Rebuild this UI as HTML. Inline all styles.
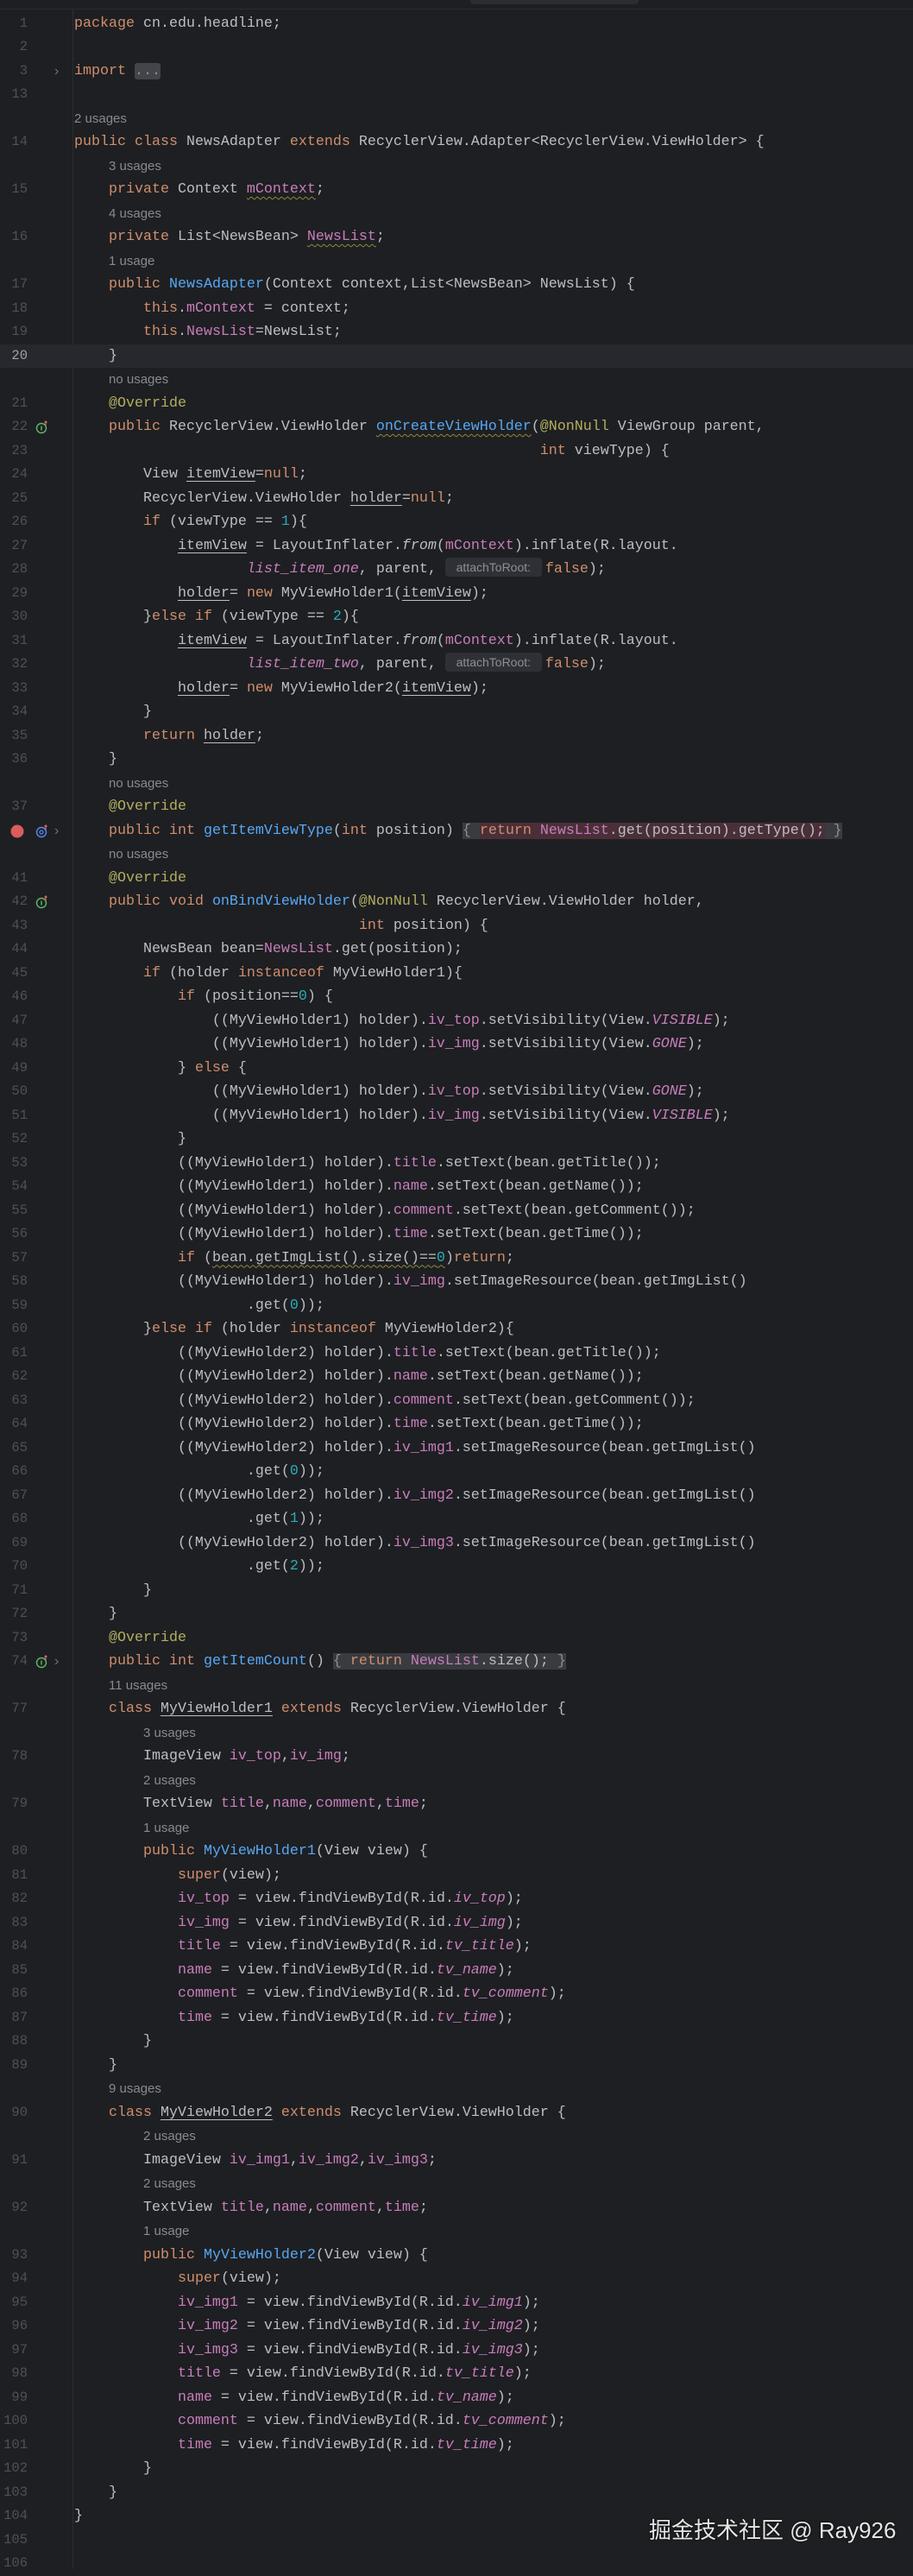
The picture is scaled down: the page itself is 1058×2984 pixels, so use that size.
<!DOCTYPE html>
<html><head><meta charset="utf-8">
<style>
html,body{margin:0;padding:0;background:#1e1f22;}
body{width:1058px;height:2976px;overflow:hidden;position:relative;font-family:"Liberation Mono",monospace;font-size:16.67px;color:#bcbec4;}
.top{position:absolute;left:0;top:0;width:1058px;height:10px;border-bottom:1px solid #2b2d30;}
.tab{position:absolute;left:545px;top:0;width:195px;height:5px;background:#2b2d30;border-radius:0 0 4px 4px;}
.gl{position:absolute;left:84px;top:11px;width:1px;height:2965px;background:#2b2d30;}
.wrap{position:absolute;left:0;top:13.5px;width:1058px;}
.r{position:relative;height:27.5px;line-height:27.5px;}
.hl{background:#26282e;}
.ln{position:absolute;left:0;width:32px;text-align:right;color:#4e5157;font-size:15.5px;}
.c{position:absolute;left:86px;white-space:pre;}
.u{position:absolute;white-space:pre;font-family:"Liberation Sans",sans-serif;font-size:15px;color:#868a91;}
.k{color:#cf8e6d}.f{color:#c77dbb}.fi{color:#c77dbb;font-style:italic}.i{font-style:italic}
.m{color:#56a8f5}.a{color:#b3ae60}.n{color:#2aacb8}
.w{text-decoration:underline wavy #8c8a3c;text-underline-offset:4px;text-decoration-thickness:1px}
.ul{text-decoration:underline;text-underline-offset:4px}
.fold{background:#43454a;color:#8c8f94;border-radius:3px}
.inl{display:inline-block;width:112px;height:22px;line-height:22px;margin-right:4px;background:#2e3035;border-radius:4px;font-family:"Liberation Sans",sans-serif;font-size:14px;color:#8c8f94;text-align:center;vertical-align:1px}
.fb{background:#393b40;color:#8c8f94}
.fr{background:#4a2f38}
.ic{position:absolute;left:41px;top:6px}
.chev{position:absolute;left:63px;top:0;color:#6f737a;font-family:"Liberation Sans",sans-serif;font-size:16px}
.wm{position:absolute;left:752px;top:2911px;font-family:"Liberation Sans","Noto Sans CJK SC",sans-serif;font-size:26px;color:#e6e6e6;text-shadow:0 0 2px #000;white-space:pre}
</style></head><body>
<div class="top"><div class="tab"></div></div>
<div class="gl"></div>
<div class="wrap">
<div class="r"><span class="ln">1</span><span class="c"><span class="k">package</span> cn.edu.headline;</span></div>
<div class="r"><span class="ln">2</span></div>
<div class="r"><span class="ln">3</span><span class="chev">›</span><span class="c"><span class="k">import</span> <span class="fold">...</span></span></div>
<div class="r"><span class="ln">13</span></div>
<div class="r"><span class="u" style="left:86px">2 usages</span></div>
<div class="r"><span class="ln">14</span><span class="c"><span class="k">public class</span> NewsAdapter <span class="k">extends</span> RecyclerView.Adapter&lt;RecyclerView.ViewHolder&gt; {</span></div>
<div class="r"><span class="u" style="left:126px">3 usages</span></div>
<div class="r"><span class="ln">15</span><span class="c">    <span class="k">private</span> Context <span class="f w">mContext</span>;</span></div>
<div class="r"><span class="u" style="left:126px">4 usages</span></div>
<div class="r"><span class="ln">16</span><span class="c">    <span class="k">private</span> List&lt;NewsBean&gt; <span class="f w">NewsList</span>;</span></div>
<div class="r"><span class="u" style="left:126px">1 usage</span></div>
<div class="r"><span class="ln">17</span><span class="c">    <span class="k">public</span> <span class="m">NewsAdapter</span>(Context context,List&lt;NewsBean&gt; NewsList) {</span></div>
<div class="r"><span class="ln">18</span><span class="c">        <span class="k">this</span>.<span class="f">mContext</span> = context;</span></div>
<div class="r"><span class="ln">19</span><span class="c">        <span class="k">this</span>.<span class="f">NewsList</span>=NewsList;</span></div>
<div class="r hl"><span class="ln" style="color:#a1a3ab">20</span><span class="c">    }</span></div>
<div class="r"><span class="u" style="left:126px">no usages</span></div>
<div class="r"><span class="ln">21</span><span class="c">    <span class="a">@Override</span></span></div>
<div class="r"><span class="ln">22</span><svg class="ic" width="16" height="16" viewBox="0 0 16 16"><circle cx="7" cy="9" r="5.5" fill="none" stroke="#5fb865" stroke-width="1.4"/><path d="M7 6.5v5" stroke="#5fb865" stroke-width="1.4"/><path d="M12 1v5M10.5 2.5L12 1l1.5 1.5" stroke="#e06c6c" stroke-width="1.2" fill="none"/></svg><span class="c">    <span class="k">public</span> RecyclerView.ViewHolder <span class="m w">onCreateViewHolder</span>(<span class="a">@NonNull</span> ViewGroup parent,</span></div>
<div class="r"><span class="ln">23</span><span class="c">                                                      <span class="k">int</span> viewType) {</span></div>
<div class="r"><span class="ln">24</span><span class="c">        View <span class="ul">itemView</span>=<span class="k">null</span>;</span></div>
<div class="r"><span class="ln">25</span><span class="c">        RecyclerView.ViewHolder <span class="ul">holder</span>=<span class="k">null</span>;</span></div>
<div class="r"><span class="ln">26</span><span class="c">        <span class="k">if</span> (viewType == <span class="n">1</span>){</span></div>
<div class="r"><span class="ln">27</span><span class="c">            <span class="ul">itemView</span> = LayoutInflater.<span class="i">from</span>(<span class="f">mContext</span>).inflate(R.layout.</span></div>
<div class="r"><span class="ln">28</span><span class="c">                    <span class="fi">list_item_one</span>, parent, <span class="inl">attachToRoot:</span><span class="k">false</span>);</span></div>
<div class="r"><span class="ln">29</span><span class="c">            <span class="ul">holder</span>= <span class="k">new</span> MyViewHolder1(<span class="ul">itemView</span>);</span></div>
<div class="r"><span class="ln">30</span><span class="c">        }<span class="k">else if</span> (viewType == <span class="n">2</span>){</span></div>
<div class="r"><span class="ln">31</span><span class="c">            <span class="ul">itemView</span> = LayoutInflater.<span class="i">from</span>(<span class="f">mContext</span>).inflate(R.layout.</span></div>
<div class="r"><span class="ln">32</span><span class="c">                    <span class="fi">list_item_two</span>, parent, <span class="inl">attachToRoot:</span><span class="k">false</span>);</span></div>
<div class="r"><span class="ln">33</span><span class="c">            <span class="ul">holder</span>= <span class="k">new</span> MyViewHolder2(<span class="ul">itemView</span>);</span></div>
<div class="r"><span class="ln">34</span><span class="c">        }</span></div>
<div class="r"><span class="ln">35</span><span class="c">        <span class="k">return</span> <span class="ul">holder</span>;</span></div>
<div class="r"><span class="ln">36</span><span class="c">    }</span></div>
<div class="r"><span class="u" style="left:126px">no usages</span></div>
<div class="r"><span class="ln">37</span><span class="c">    <span class="a">@Override</span></span></div>
<div class="r"><svg style="position:absolute;left:12px;top:6px" width="16" height="16"><circle cx="8" cy="8" r="7.5" fill="#db5c5c"/></svg><svg class="ic" width="16" height="16" viewBox="0 0 16 16"><circle cx="7" cy="9" r="5.5" fill="none" stroke="#548af7" stroke-width="1.4"/><circle cx="7" cy="9" r="2" fill="none" stroke="#548af7" stroke-width="1.2"/><path d="M12 1v5M10.5 2.5L12 1l1.5 1.5" stroke="#e06c6c" stroke-width="1.2" fill="none"/></svg><span class="chev">›</span><span class="c">    <span class="k">public int</span> <span class="m">getItemViewType</span>(<span class="k">int</span> position) <span class="fb">{ <span class="fr"><span class="k">return</span> <span class="f">NewsList</span><span style="color:#bcbec4">.get(position).getType();</span></span> }</span></span></div>
<div class="r"><span class="u" style="left:126px">no usages</span></div>
<div class="r"><span class="ln">41</span><span class="c">    <span class="a">@Override</span></span></div>
<div class="r"><span class="ln">42</span><svg class="ic" width="16" height="16" viewBox="0 0 16 16"><circle cx="7" cy="9" r="5.5" fill="none" stroke="#5fb865" stroke-width="1.4"/><path d="M7 6.5v5" stroke="#5fb865" stroke-width="1.4"/><path d="M12 1v5M10.5 2.5L12 1l1.5 1.5" stroke="#e06c6c" stroke-width="1.2" fill="none"/></svg><span class="c">    <span class="k">public void</span> <span class="m">onBindViewHolder</span>(<span class="a">@NonNull</span> RecyclerView.ViewHolder holder,</span></div>
<div class="r"><span class="ln">43</span><span class="c">                                 <span class="k">int</span> position) {</span></div>
<div class="r"><span class="ln">44</span><span class="c">        NewsBean bean=<span class="f">NewsList</span>.get(position);</span></div>
<div class="r"><span class="ln">45</span><span class="c">        <span class="k">if</span> (holder <span class="k">instanceof</span> MyViewHolder1){</span></div>
<div class="r"><span class="ln">46</span><span class="c">            <span class="k">if</span> (position==<span class="n">0</span>) {</span></div>
<div class="r"><span class="ln">47</span><span class="c">                ((MyViewHolder1) holder).<span class="f">iv_top</span>.setVisibility(View.<span class="fi">VISIBLE</span>);</span></div>
<div class="r"><span class="ln">48</span><span class="c">                ((MyViewHolder1) holder).<span class="f">iv_img</span>.setVisibility(View.<span class="fi">GONE</span>);</span></div>
<div class="r"><span class="ln">49</span><span class="c">            } <span class="k">else</span> {</span></div>
<div class="r"><span class="ln">50</span><span class="c">                ((MyViewHolder1) holder).<span class="f">iv_top</span>.setVisibility(View.<span class="fi">GONE</span>);</span></div>
<div class="r"><span class="ln">51</span><span class="c">                ((MyViewHolder1) holder).<span class="f">iv_img</span>.setVisibility(View.<span class="fi">VISIBLE</span>);</span></div>
<div class="r"><span class="ln">52</span><span class="c">            }</span></div>
<div class="r"><span class="ln">53</span><span class="c">            ((MyViewHolder1) holder).<span class="f">title</span>.setText(bean.getTitle());</span></div>
<div class="r"><span class="ln">54</span><span class="c">            ((MyViewHolder1) holder).<span class="f">name</span>.setText(bean.getName());</span></div>
<div class="r"><span class="ln">55</span><span class="c">            ((MyViewHolder1) holder).<span class="f">comment</span>.setText(bean.getComment());</span></div>
<div class="r"><span class="ln">56</span><span class="c">            ((MyViewHolder1) holder).<span class="f">time</span>.setText(bean.getTime());</span></div>
<div class="r"><span class="ln">57</span><span class="c">            <span class="k">if</span> (<span class="w">bean.getImgList().size()==<span class="n">0</span></span>)<span class="k">return</span>;</span></div>
<div class="r"><span class="ln">58</span><span class="c">            ((MyViewHolder1) holder).<span class="f">iv_img</span>.setImageResource(bean.getImgList()</span></div>
<div class="r"><span class="ln">59</span><span class="c">                    .get(<span class="n">0</span>));</span></div>
<div class="r"><span class="ln">60</span><span class="c">        }<span class="k">else if</span> (holder <span class="k">instanceof</span> MyViewHolder2){</span></div>
<div class="r"><span class="ln">61</span><span class="c">            ((MyViewHolder2) holder).<span class="f">title</span>.setText(bean.getTitle());</span></div>
<div class="r"><span class="ln">62</span><span class="c">            ((MyViewHolder2) holder).<span class="f">name</span>.setText(bean.getName());</span></div>
<div class="r"><span class="ln">63</span><span class="c">            ((MyViewHolder2) holder).<span class="f">comment</span>.setText(bean.getComment());</span></div>
<div class="r"><span class="ln">64</span><span class="c">            ((MyViewHolder2) holder).<span class="f">time</span>.setText(bean.getTime());</span></div>
<div class="r"><span class="ln">65</span><span class="c">            ((MyViewHolder2) holder).<span class="f">iv_img1</span>.setImageResource(bean.getImgList()</span></div>
<div class="r"><span class="ln">66</span><span class="c">                    .get(<span class="n">0</span>));</span></div>
<div class="r"><span class="ln">67</span><span class="c">            ((MyViewHolder2) holder).<span class="f">iv_img2</span>.setImageResource(bean.getImgList()</span></div>
<div class="r"><span class="ln">68</span><span class="c">                    .get(<span class="n">1</span>));</span></div>
<div class="r"><span class="ln">69</span><span class="c">            ((MyViewHolder2) holder).<span class="f">iv_img3</span>.setImageResource(bean.getImgList()</span></div>
<div class="r"><span class="ln">70</span><span class="c">                    .get(<span class="n">2</span>));</span></div>
<div class="r"><span class="ln">71</span><span class="c">        }</span></div>
<div class="r"><span class="ln">72</span><span class="c">    }</span></div>
<div class="r"><span class="ln">73</span><span class="c">    <span class="a">@Override</span></span></div>
<div class="r"><span class="ln">74</span><svg class="ic" width="16" height="16" viewBox="0 0 16 16"><circle cx="7" cy="9" r="5.5" fill="none" stroke="#5fb865" stroke-width="1.4"/><path d="M7 6.5v5" stroke="#5fb865" stroke-width="1.4"/><path d="M12 1v5M10.5 2.5L12 1l1.5 1.5" stroke="#e06c6c" stroke-width="1.2" fill="none"/></svg><span class="chev">›</span><span class="c">    <span class="k">public int</span> <span class="m">getItemCount</span>() <span class="fb">{ <span class="k">return</span> <span class="f">NewsList</span><span style="color:#bcbec4">.size();</span> }</span></span></div>
<div class="r"><span class="u" style="left:126px">11 usages</span></div>
<div class="r"><span class="ln">77</span><span class="c">    <span class="k">class</span> <span class="ul">MyViewHolder1</span> <span class="k">extends</span> RecyclerView.ViewHolder {</span></div>
<div class="r"><span class="u" style="left:166px">3 usages</span></div>
<div class="r"><span class="ln">78</span><span class="c">        ImageView <span class="f">iv_top</span>,<span class="f">iv_img</span>;</span></div>
<div class="r"><span class="u" style="left:166px">2 usages</span></div>
<div class="r"><span class="ln">79</span><span class="c">        TextView <span class="f">title</span>,<span class="f">name</span>,<span class="f">comment</span>,<span class="f">time</span>;</span></div>
<div class="r"><span class="u" style="left:166px">1 usage</span></div>
<div class="r"><span class="ln">80</span><span class="c">        <span class="k">public</span> <span class="m">MyViewHolder1</span>(View view) {</span></div>
<div class="r"><span class="ln">81</span><span class="c">            <span class="k">super</span>(view);</span></div>
<div class="r"><span class="ln">82</span><span class="c">            <span class="f">iv_top</span> = view.findViewById(R.id.<span class="fi">iv_top</span>);</span></div>
<div class="r"><span class="ln">83</span><span class="c">            <span class="f">iv_img</span> = view.findViewById(R.id.<span class="fi">iv_img</span>);</span></div>
<div class="r"><span class="ln">84</span><span class="c">            <span class="f">title</span> = view.findViewById(R.id.<span class="fi">tv_title</span>);</span></div>
<div class="r"><span class="ln">85</span><span class="c">            <span class="f">name</span> = view.findViewById(R.id.<span class="fi">tv_name</span>);</span></div>
<div class="r"><span class="ln">86</span><span class="c">            <span class="f">comment</span> = view.findViewById(R.id.<span class="fi">tv_comment</span>);</span></div>
<div class="r"><span class="ln">87</span><span class="c">            <span class="f">time</span> = view.findViewById(R.id.<span class="fi">tv_time</span>);</span></div>
<div class="r"><span class="ln">88</span><span class="c">        }</span></div>
<div class="r"><span class="ln">89</span><span class="c">    }</span></div>
<div class="r"><span class="u" style="left:126px">9 usages</span></div>
<div class="r"><span class="ln">90</span><span class="c">    <span class="k">class</span> <span class="ul">MyViewHolder2</span> <span class="k">extends</span> RecyclerView.ViewHolder {</span></div>
<div class="r"><span class="u" style="left:166px">2 usages</span></div>
<div class="r"><span class="ln">91</span><span class="c">        ImageView <span class="f">iv_img1</span>,<span class="f">iv_img2</span>,<span class="f">iv_img3</span>;</span></div>
<div class="r"><span class="u" style="left:166px">2 usages</span></div>
<div class="r"><span class="ln">92</span><span class="c">        TextView <span class="f">title</span>,<span class="f">name</span>,<span class="f">comment</span>,<span class="f">time</span>;</span></div>
<div class="r"><span class="u" style="left:166px">1 usage</span></div>
<div class="r"><span class="ln">93</span><span class="c">        <span class="k">public</span> <span class="m">MyViewHolder2</span>(View view) {</span></div>
<div class="r"><span class="ln">94</span><span class="c">            <span class="k">super</span>(view);</span></div>
<div class="r"><span class="ln">95</span><span class="c">            <span class="f">iv_img1</span> = view.findViewById(R.id.<span class="fi">iv_img1</span>);</span></div>
<div class="r"><span class="ln">96</span><span class="c">            <span class="f">iv_img2</span> = view.findViewById(R.id.<span class="fi">iv_img2</span>);</span></div>
<div class="r"><span class="ln">97</span><span class="c">            <span class="f">iv_img3</span> = view.findViewById(R.id.<span class="fi">iv_img3</span>);</span></div>
<div class="r"><span class="ln">98</span><span class="c">            <span class="f">title</span> = view.findViewById(R.id.<span class="fi">tv_title</span>);</span></div>
<div class="r"><span class="ln">99</span><span class="c">            <span class="f">name</span> = view.findViewById(R.id.<span class="fi">tv_name</span>);</span></div>
<div class="r"><span class="ln">100</span><span class="c">            <span class="f">comment</span> = view.findViewById(R.id.<span class="fi">tv_comment</span>);</span></div>
<div class="r"><span class="ln">101</span><span class="c">            <span class="f">time</span> = view.findViewById(R.id.<span class="fi">tv_time</span>);</span></div>
<div class="r"><span class="ln">102</span><span class="c">        }</span></div>
<div class="r"><span class="ln">103</span><span class="c">    }</span></div>
<div class="r"><span class="ln">104</span><span class="c">}</span></div>
<div class="r"><span class="ln">105</span></div>
<div class="r"><span class="ln">106</span></div>
</div>
<div class="wm">掘金技术社区 @ Ray926</div>
</body></html>
